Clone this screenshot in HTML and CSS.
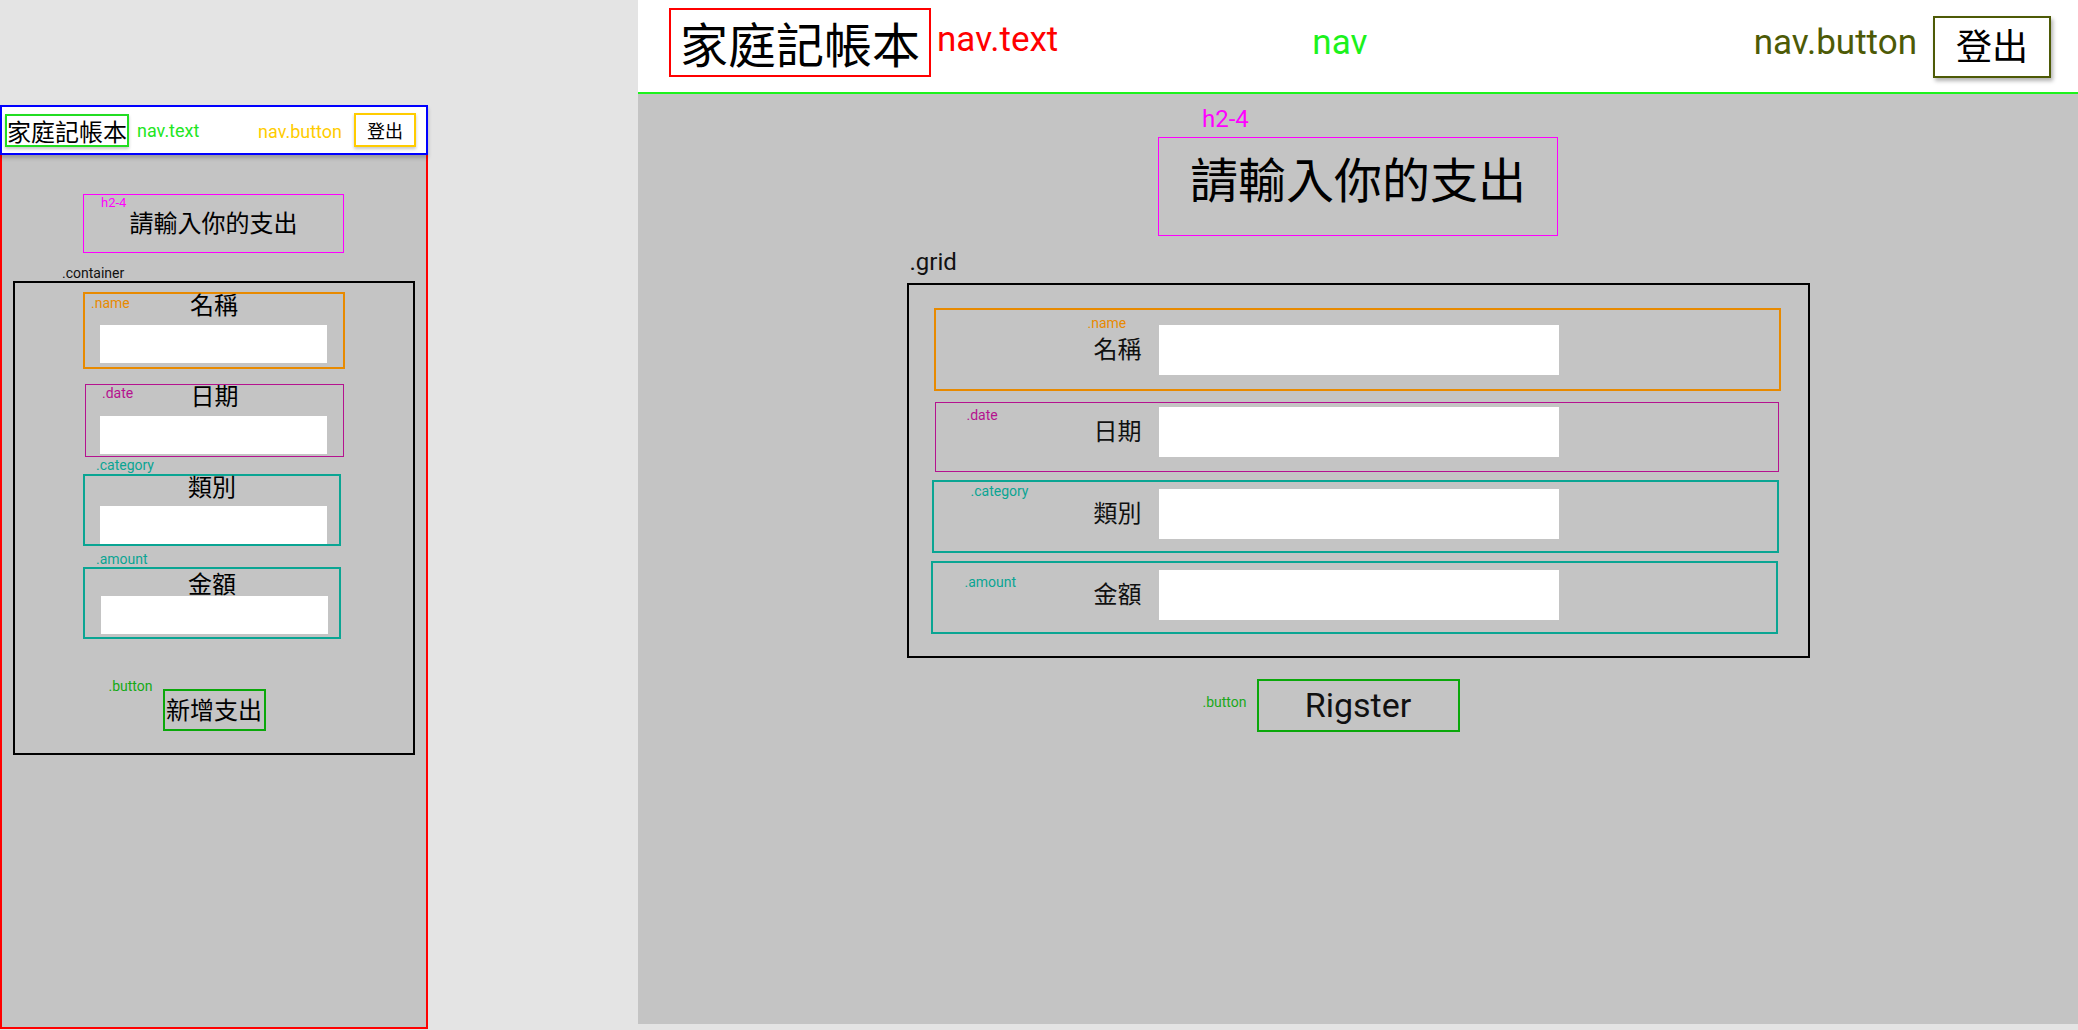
FILE: index.html
```html
<!DOCTYPE html>
<html lang="zh-Hant">
<head>
<meta charset="utf-8">
<title>家庭記帳本</title>
<link rel="stylesheet" href="styles.css">
</head>
<body>
<div class="phone">
  <header class="m-nav">
    <div class="m-brand">家庭記帳本</div>
    <span class="m-tag m-tag-text">nav.text</span>
    <span class="m-tag m-tag-button">nav.button</span>
    <button class="m-logout" type="button">登出</button>
  </header>
  <main class="m-main">
    <h2 class="m-title"><span class="m-note note-pink m-note-h2">h2-4</span>請輸入你的支出</h2>
    <div class="m-container-tag">.container</div>
    <form class="m-container">
      <div class="m-field m-field-name">
        <span class="m-note note-orange m-note-name">.name</span>
        <div class="m-label">名稱</div>
        <input class="m-input" type="text">
      </div>
      <div class="m-field m-field-date">
        <span class="m-note note-purple m-note-date">.date</span>
        <div class="m-label">日期</div>
        <input class="m-input" type="text">
      </div>
      <div class="m-tag-out m-tag-cat note-teal">.category</div>
      <div class="m-field m-field-cat">
        <div class="m-label">類別</div>
        <input class="m-input" type="text">
      </div>
      <div class="m-tag-out m-tag-amt note-teal">.amount</div>
      <div class="m-field m-field-amt">
        <div class="m-label">金額</div>
        <input class="m-input" type="text">
      </div>
      <div class="m-submit-wrap">
        <span class="m-note note-green m-note-button">.button</span>
        <button class="m-submit" type="button">新增支出</button>
      </div>
    </form>
  </main>
</div>

<div class="desk">
  <header class="d-nav">
    <div class="d-brand">家庭記帳本</div>
    <span class="d-tag d-tag-text">nav.text</span>
    <span class="d-tag d-tag-nav">nav</span>
    <span class="d-tag d-tag-button">nav.button</span>
    <button class="d-logout" type="button">登出</button>
  </header>
  <main class="d-main">
    <div class="d-heading-wrap">
      <span class="d-note-h2">h2-4</span>
      <h2 class="d-title">請輸入你的支出</h2>
    </div>
    <div class="d-grid-wrap">
      <div class="d-grid-tag">.grid</div>
      <form class="d-grid">
        <div class="d-row d-row-name">
          <span class="d-note note-orange d-note-name">.name</span>
          <label class="d-label">名稱</label>
          <input class="d-input" type="text">
        </div>
        <div class="d-row d-row-date">
          <span class="d-note note-purple d-note-date">.date</span>
          <label class="d-label">日期</label>
          <input class="d-input" type="text">
        </div>
        <div class="d-row d-row-cat">
          <span class="d-note note-teal d-note-cat">.category</span>
          <label class="d-label">類別</label>
          <input class="d-input" type="text">
        </div>
        <div class="d-row d-row-amt">
          <span class="d-note note-teal d-note-amt">.amount</span>
          <label class="d-label">金額</label>
          <input class="d-input" type="text">
        </div>
      </form>
    </div>
    <div class="d-submit-wrap">
      <span class="d-note-button">.button</span>
      <button class="d-submit" type="button">Rigster</button>
    </div>
  </main>
</div>
</body>
</html>
```

FILE: styles.css
```css
* {
  box-sizing: border-box;
}

html,
body {
  margin: 0;
  height: 100%;
}

body {
  background: #e4e4e4;
  display: flex;
  align-items: flex-start;
  gap: 210px;
  overflow: hidden;
  font-family: Roboto, "Liberation Sans", sans-serif;
  color: #111;
}

h2 {
  margin: 0;
  font-weight: 400;
}

input {
  border: 0;
  outline: none;
  padding: 0;
  margin: 0;
  background: #fff;
  display: block;
}

button {
  padding: 0;
  margin: 0;
  cursor: pointer;
  color: #000;
}

.cjk,
.m-brand,
.m-logout,
.m-title,
.m-label,
.m-submit,
.d-brand,
.d-logout,
.d-title,
.d-label {
  font-family: "Noto Sans CJK TC", "Noto Sans CJK SC", sans-serif;
  font-weight: 400;
}

.note-pink { color: #ff00ff; }
.note-orange { color: #e88a00; }
.note-purple { color: #b5128f; }
.note-teal { color: #0aa593; }
.note-green { color: #14aa14; }

/* ---------- mobile mock ---------- */

.phone {
  width: 428px;
  height: 924px;
  margin-top: 105px;
  display: flex;
  flex-direction: column;
  flex: none;
}

.m-nav {
  position: relative;
  z-index: 1;
  flex: none;
  height: 50px;
  border: 2px solid #0000ff;
  background: #fff;
  display: flex;
  align-items: flex-start;
  padding: 0 10px 0 3px;
  box-shadow: 0 3px 4px rgba(0, 0, 0, 0.22);
}

.m-brand {
  margin-top: 7px;
  height: 33px;
  border: 2px solid #22dd22;
  font-size: 24px;
  line-height: 29px;
  color: #000;
  box-shadow: 0 2px 3px rgba(0, 0, 0, 0.22);
}

.m-tag {
  font-size: 18px;
  line-height: 21px;
  white-space: nowrap;
}

.m-tag-text {
  margin: 13px 0 0 8px;
  color: #22e622;
}

.m-tag-button {
  margin: 14px 0 0 auto;
  color: #ffcc00;
}

.m-logout {
  margin: 6px 0 0 12px;
  width: 62px;
  height: 34px;
  border: 2px solid #ffcc00;
  background: #fff;
  font-size: 18px;
  line-height: 30px;
  box-shadow: 0 2px 3px rgba(0, 0, 0, 0.22);
}

.m-main {
  flex: 1;
  background: #c4c4c4;
  border: 2px solid #ff0000;
  border-top: 0;
  display: flex;
  flex-direction: column;
  align-items: flex-start;
}

.m-title {
  position: relative;
  margin: 39px 0 0 81px;
  width: 261px;
  height: 59px;
  border: 1px solid #ff00ff;
  text-align: center;
  font-size: 24px;
  line-height: 53px;
  padding-bottom: 4px;
  color: #000;
}

.m-note {
  position: absolute;
  font-family: Roboto, "Liberation Sans", sans-serif;
  font-size: 14px;
  line-height: 16px;
  white-space: nowrap;
}

.m-note-h2 {
  left: 17px;
  top: 0;
  font-size: 13px;
  line-height: 15px;
}

.m-container-tag {
  margin: 12px 0 0 60px;
  font-size: 14px;
  line-height: 16px;
  color: #111;
}

.m-container {
  margin: 0 0 0 11px;
  width: 402px;
  height: 474px;
  border: 2px solid #000;
  padding: 9px 0 21px;
  display: flex;
  flex-direction: column;
  align-items: flex-start;
}

.m-field {
  position: relative;
  margin-left: 68px;
  width: 262px;
  height: 77px;
  border: 2px solid #e88a00;
}

.m-label {
  text-align: center;
  font-size: 24px;
  line-height: 20px;
  color: #000;
}

.m-input {
  width: 227px;
  height: 38px;
  margin: 11px 0 0 15px;
}

.m-note-name {
  left: 6px;
  top: 1px;
}

.m-field-date {
  margin: 15px 0 0 70px;
  width: 259px;
  height: 73px;
  border: 1px solid #b5128f;
}

.m-field-date .m-input {
  margin-left: 14px;
}

.m-note-date {
  left: 16px;
  top: 0;
}

.m-tag-out {
  margin-left: 81px;
  font-size: 14px;
  line-height: 16px;
}

.m-tag-amt {
  margin-top: 5px;
}

.m-field-cat {
  margin-top: 1px;
  width: 258px;
  height: 72px;
  border-color: #0aa593;
}

.m-field-cat .m-label {
  line-height: 19px;
}

.m-field-amt {
  width: 258px;
  height: 72px;
  border-color: #0aa593;
}

.m-field-amt .m-label {
  line-height: 27px;
}

.m-field-amt .m-input {
  margin: 0 0 0 16px;
}

.m-submit-wrap {
  position: relative;
  align-self: center;
  margin-top: 50px;
}

.m-submit {
  display: block;
  width: 103px;
  height: 42px;
  border: 2px solid #0aa80a;
  background: transparent;
  font-size: 24px;
  line-height: 36px;
  padding-bottom: 2px;
}

.m-note-button {
  left: -54px;
  top: -11px;
}

/* ---------- desktop mock ---------- */

.desk {
  width: 1440px;
  height: 1024px;
  flex: none;
  display: flex;
  flex-direction: column;
}

.d-nav {
  flex: none;
  height: 94px;
  background: #fff;
  border-bottom: 2px solid #1cf21c;
  display: flex;
  align-items: flex-start;
  padding: 0 27px 0 31px;
}

.d-brand {
  margin-top: 8px;
  height: 69px;
  border: 2px solid #ff0000;
  padding: 0 9px;
  font-size: 48px;
  line-height: 65px;
  color: #000;
}

.d-tag {
  font-size: 35px;
  line-height: 40px;
  white-space: nowrap;
}

.d-tag-text {
  margin: 20px 0 0 6px;
  color: #ff0000;
}

.d-tag-nav {
  margin: 23px 0 0 254px;
  color: #1cf21c;
}

.d-tag-button {
  margin: 23px 0 0 auto;
  color: #4d5a06;
}

.d-logout {
  margin: 16px 0 0 16px;
  width: 118px;
  height: 62px;
  border: 2px solid #4d5a06;
  background: #fff;
  font-size: 36px;
  line-height: 52px;
  padding-bottom: 6px;
  box-shadow: 2px 3px 4px rgba(0, 0, 0, 0.3);
}

.d-main {
  flex: 1;
  background: #c4c4c4;
  display: flex;
  flex-direction: column;
  align-items: center;
  padding-top: 11px;
}

.d-heading-wrap {
  width: 400px;
}

.d-note-h2 {
  display: block;
  margin-left: 44px;
  font-size: 24px;
  line-height: 28px;
  color: #ff00ff;
}

.d-title {
  margin-top: 4px;
  height: 99px;
  border: 1px solid #ff00ff;
  text-align: center;
  font-size: 48px;
  line-height: 48px;
  padding-top: 15px;
  color: #000;
}

.d-grid-wrap {
  width: 903px;
  margin-top: 12px;
}

.d-grid-tag {
  margin-left: 3px;
  font-size: 24px;
  line-height: 28px;
  color: #111;
}

.d-grid {
  margin-top: 7px;
  height: 375px;
  border: 2px solid #000;
  padding: 23px 0 22px;
}

.d-row {
  position: relative;
  display: grid;
  grid-template-columns: 223px 400px 1fr;
  align-items: center;
}

.d-row-name {
  margin: 0 27px 0 25px;
  height: 83px;
  border: 2px solid #e88a00;
  padding: 15px 0 14px;
}

.d-row-date {
  margin: 11px 29px 0 26px;
  height: 70px;
  border: 1px solid #b5128f;
  padding: 4px 0 14px;
}

.d-row-cat {
  margin: 8px 29px 0 23px;
  height: 73px;
  border: 2px solid #0aa593;
  padding: 7px 0 12px;
  grid-template-columns: 225px 400px 1fr;
}

.d-row-amt {
  margin: 8px 30px 0 22px;
  height: 73px;
  border: 2px solid #0aa593;
  padding: 7px 0 12px;
  grid-template-columns: 226px 400px 1fr;
}

.d-label {
  text-align: right;
  padding-right: 17px;
  font-size: 24px;
  line-height: 30px;
  margin-bottom: 5px;
  color: #111;
}

.d-input {
  width: 400px;
  height: 50px;
}

.d-note {
  position: absolute;
  font-size: 14px;
  line-height: 16px;
  white-space: nowrap;
}

.d-note-name {
  left: 152px;
  top: 5px;
}

.d-note-date {
  left: 31px;
  top: 4px;
}

.d-note-cat {
  left: 37px;
  top: 1px;
}

.d-note-amt {
  left: 32px;
  top: 11px;
}

.d-submit-wrap {
  position: relative;
  margin-top: 21px;
}

.d-submit {
  display: block;
  width: 203px;
  height: 53px;
  border: 2px solid #0aa80a;
  background: transparent;
  font-family: Roboto, "Liberation Sans", sans-serif;
  font-size: 34px;
  line-height: 49px;
  color: #111;
}

.d-note-button {
  position: absolute;
  right: calc(100% + 10px);
  top: 15px;
  font-size: 14px;
  line-height: 16px;
  color: #1aa81a;
  white-space: nowrap;
}
```
